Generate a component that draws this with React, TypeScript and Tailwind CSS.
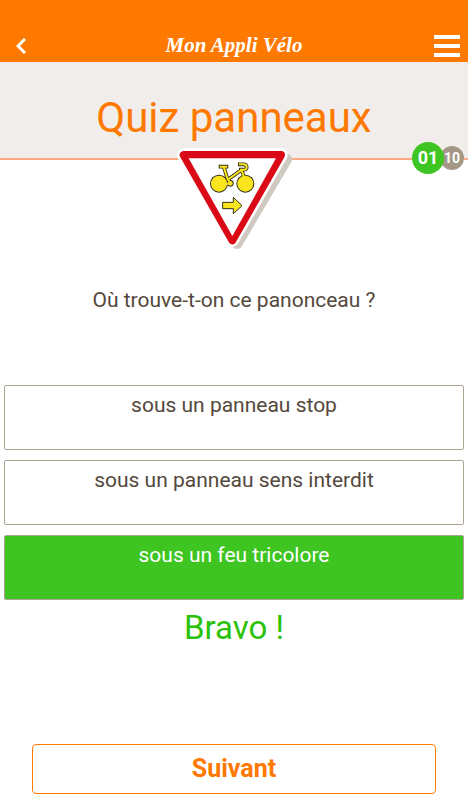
import React, { useState } from 'react';

const answers = [
  { id: 'stop', label: 'sous un panneau stop' },
  { id: 'interdit', label: 'sous un panneau sens interdit' },
  { id: 'feu', label: 'sous un feu tricolore' },
];

const correctId = 'feu';

const RoadSign: React.FC = () => (
  <svg width="140" height="115" viewBox="-3 0 420 345" role="img" aria-label="Panonceau vélo">
    <g strokeLinejoin="round">
      <path d="M74 58H364L216 310Z" fill="#cfcac1" stroke="#cfcac1" strokeWidth="34" />
      <path d="M56 45H348L202 300Z" fill="#fff" stroke="#fff" strokeWidth="40" />
      <path d="M56 45H348L202 301Z" fill="#d90a16" stroke="#d90a16" strokeWidth="24" />
    </g>
    <path d="M71 55H333L202 288Z" fill="#fff" />

    {/* Bike: dark pass first, yellow pass on top */}
    <g fill="none" strokeLinejoin="round">
      <g stroke="#33301a" strokeWidth="11">
        <path d="M161 80H190M176 80L187 115L195 128" />
        <path d="M187 120L229 90" />
        <path d="M219 73H236C247 73 248 87 239 89H222M229 89L240 118" />
      </g>
      <g fill="#33301a">
        <circle cx="162" cy="131" r="27" />
        <circle cx="241" cy="131" r="27" />
        <circle cx="196" cy="130" r="10" />
      </g>
      <g fill="#fbe51e">
        <circle cx="162" cy="131" r="24" />
        <circle cx="241" cy="131" r="24" />
        <circle cx="196" cy="130" r="7" />
      </g>
      <g stroke="#fbe51e" strokeWidth="6">
        <path d="M164 80H187M176 80L187 115L195 128M178 131H196" />
        <path d="M187 120L229 90" />
        <path d="M222 73H236C247 73 248 87 239 89H225M229 89L240 118" />
      </g>
    </g>
    <path d="M173 187H205V172L231 197L205 221V206H173Z" fill="#fbe51e" stroke="#33301a" strokeWidth="3" />
  </svg>
);

const App: React.FC = () => {
  const [selected, setSelected] = useState('feu');

  return (
    <div className="flex min-h-screen flex-col bg-white font-['Roboto',sans-serif] text-[#54483c]">
      {/* Header */}
      <header className="flex items-end justify-between bg-[#ff7800] pt-7 text-white">
        <button type="button" aria-label="Retour" className="flex h-[34px] w-12 items-center pt-0.5 pl-4">
          <svg width="10" height="16" viewBox="0 0 10 16" fill="none" stroke="currentColor" strokeWidth="3">
            <path d="M9 1L2 8L9 15" />
          </svg>
        </button>
        <a href="#accueil" className="font-['Liberation_Serif',serif] text-[21px] leading-[34px] font-bold italic">
          Mon Appli Vélo
        </a>
        <button type="button" aria-label="Menu" className="flex h-[34px] w-12 items-center justify-end pt-0.5 pr-2">
          <svg width="26" height="22" viewBox="0 0 26 22" fill="currentColor">
            <path d="M0 0H26V4H0ZM0 9H26V13H0ZM0 18H26V22H0Z" />
          </svg>
        </button>
      </header>

      {/* Title */}
      <div className="relative border-b-2 border-[#ffa884] bg-[#f0edea] pt-7 pb-3 text-center">
        <h1 className="text-[42px] leading-[56px] text-[#ff7800]">Quiz panneaux</h1>
        <div className="absolute right-1 -bottom-4 flex items-center text-white">
          <span className="z-10 flex size-8 items-center justify-center rounded-full bg-[#3ec522] text-lg font-bold">01</span>
          <span className="-ml-1 flex size-6 items-center justify-center rounded-full bg-[#a39886] text-sm font-bold">10</span>
        </div>
      </div>

      <main className="flex flex-1 flex-col">
        <div className="relative -mt-5 flex justify-center">
          <RoadSign />
        </div>
        <p className="mt-[31px] mb-[71px] text-center text-[21px] leading-7">Où trouve-t-on ce panonceau ?</p>

        <div className="flex flex-col gap-[10px] px-1">
          {answers.map((answer) => (
            <button
              key={answer.id}
              type="button"
              onClick={() => setSelected(answer.id)}
              className={`flex h-[65px] items-start justify-center rounded-xs border border-[#aca395] pt-[5px] text-[21px] leading-7
                ${selected === answer.id ? 'bg-[#3ec522] text-white' : 'bg-white'}
              `}
            >
              {answer.label}
            </button>
          ))}
        </div>

        {selected === correctId && (
          <p className="mt-2 text-center text-[33px] leading-10 text-[#2cc20a]">Bravo !</p>
        )}

        <div className="mt-auto px-8 pb-1.5">
          <button type="button" className="h-[50px] w-full rounded-sm border border-[#ff7800] text-[25px] leading-8 font-bold text-[#ff7800]">
            Suivant
          </button>
        </div>
      </main>
    </div>
  );
};

export default App;
